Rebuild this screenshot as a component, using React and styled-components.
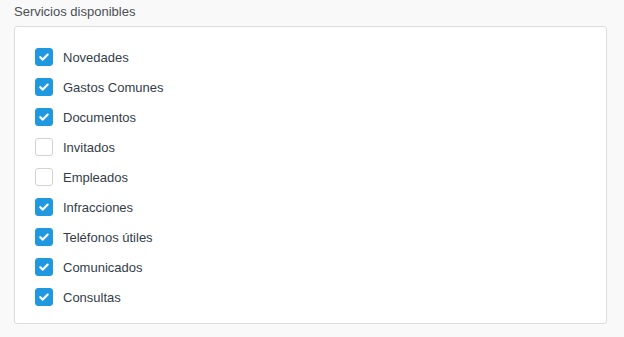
import React from "react";
import styled, { createGlobalStyle } from "styled-components";

const Global = createGlobalStyle`
  html, body { margin: 0; padding: 0; background: #f9f9f9; }
  body { font-family: "Liberation Sans", Arial, sans-serif; }
`;

const Page = styled.div`
  padding: 3px 0 0 14px;
`;

const Title = styled.div`
  font-size: 13px;
  line-height: 18px;
  color: #4a4f55;
  margin-bottom: 5px;
`;

const Panel = styled.div`
  box-sizing: border-box;
  width: 593px;
  height: 298px;
  background: #fff;
  border: 1px solid #dcdcdc;
  border-radius: 3px;
  padding: 15px 20px 10px 20px;
`;

const Row = styled.label`
  display: flex;
  align-items: center;
  height: 30px;
  gap: 10px;
  cursor: pointer;
`;

const Box = styled.span`
  box-sizing: border-box;
  width: 18px;
  height: 18px;
  border-radius: 3px;
  display: flex;
  align-items: center;
  justify-content: center;
  background: ${(p) => (p.$checked ? "#1f98e0" : "#fff")};
  border: 1px solid ${(p) => (p.$checked ? "#1f98e0" : "#d2d2d2")};
`;

const Label = styled.span`
  font-size: 13px;
  color: #333d48;
`;

const items = [
  ["Novedades", true],
  ["Gastos Comunes", true],
  ["Documentos", true],
  ["Invitados", false],
  ["Empleados", false],
  ["Infracciones", true],
  ["Teléfonos útiles", true],
  ["Comunicados", true],
  ["Consultas", true],
];

const Check = () => (
  <svg width="12" height="12" viewBox="0 0 12 12">
    <path d="M2.3 6.2 L4.8 8.6 L9.7 3.6" fill="none" stroke="#fff" strokeWidth="2.2" strokeLinecap="round" strokeLinejoin="round" />
  </svg>
);

export default function App() {
  return (
    <Page>
      <Global />
      <Title>Servicios disponibles</Title>
      <Panel>
        {items.map(([name, on]) => (
          <Row key={name}>
            <Box $checked={on}>{on && <Check />}</Box>
            <Label>{name}</Label>
          </Row>
        ))}
      </Panel>
    </Page>
  );
}
